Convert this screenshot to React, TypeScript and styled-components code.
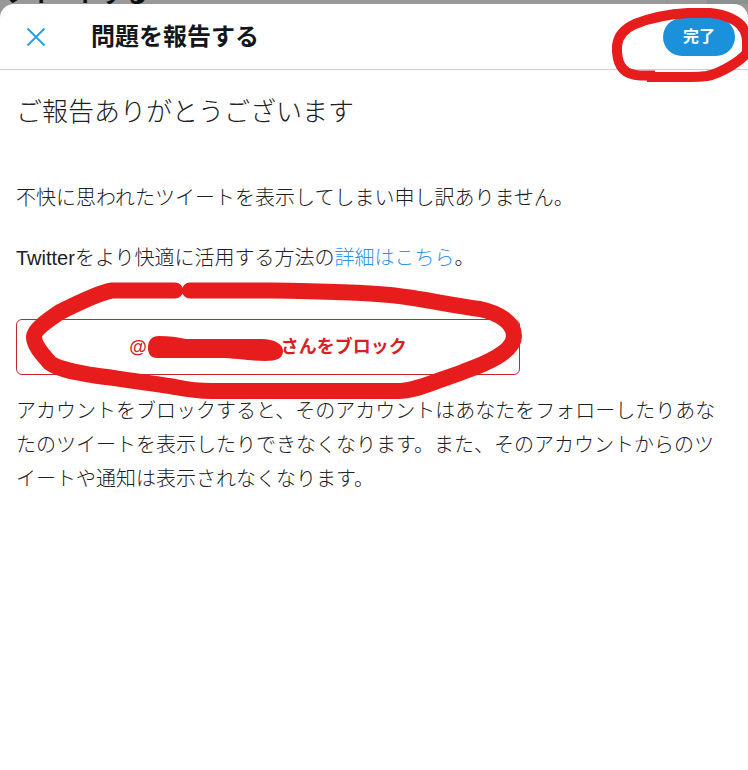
import React from "react";
import styled, { createGlobalStyle } from "styled-components";

const GlobalStyle = createGlobalStyle`
  * { box-sizing: border-box; }
  html, body, #root { height: 100%; }
  body {
    margin: 0;
    background: #999999;
    color: #1c2023;
    font-family: "Liberation Sans", "Noto Sans CJK JP", sans-serif;
    font-size: 20px;
    line-height: 34px;
  }
`;

const Page = styled.div`
  display: flex;
  flex-direction: column;
  min-height: 100%;
`;

const Backdrop = styled.div`
  display: flex;
  justify-content: space-between;
  align-items: flex-end;
  height: 24px;
  margin-bottom: -20px;
  padding-bottom: 20px;
  background: #999999;
`;

const BackdropTitle = styled.div`
  padding-left: 4px;
  color: #0c0f12;
  font-size: 24px;
  font-weight: 700;
  line-height: 20px;
  white-space: nowrap;
`;

const BackdropSearch = styled.div`
  display: flex;
  justify-content: flex-end;
  width: 81px;
  height: 4px;
  border-left: 1px solid #8a9094;
`;

const BackdropField = styled.div`
  width: 41px;
  height: 4px;
  background: #8b9093;
`;

const Dialog = styled.main`
  position: relative;
  flex: 1;
  border-radius: 14px 14px 0 0;
  background: #ffffff;
`;

const Header = styled.header`
  position: relative;
  display: flex;
  align-items: center;
  height: 66px;
  padding: 0 13px 0 26px;
  border-bottom: 1px solid #c8d1d8;
`;

const CloseButton = styled.button`
  display: flex;
  margin: 0;
  padding: 0;
  border: 0;
  background: none;
  cursor: pointer;
`;

const Title = styled.h1`
  flex: 1;
  margin: 0 0 0 45px;
  color: #14171a;
  font-size: 24px;
  font-weight: 700;
`;

const DoneButton = styled.button`
  height: 38px;
  padding: 0 20px;
  border: 0;
  border-radius: 19px;
  background: #1b91db;
  color: #ffffff;
  font: inherit;
  font-size: 16px;
  font-weight: 700;
  cursor: pointer;
`;

const Content = styled.div`
  padding: 25px 16px;
`;

const Heading = styled.h2`
  margin: 0 0 52px;
  font-size: 26px;
  font-weight: 300;
`;

const Paragraph = styled.p`
  margin: 0 0 26px;
  font-weight: 300;
`;

const Link = styled.a`
  color: #2b95e6;
  text-decoration: none;
`;

const BlockArea = styled.div`
  position: relative;
  max-width: 504px;
  margin: 44px 0 19px;
`;

const BlockButton = styled.button`
  display: flex;
  align-items: center;
  justify-content: center;
  width: 100%;
  height: 56px;
  padding: 0;
  border: 1px solid #c2282d;
  border-radius: 6px;
  background: #ffffff;
  color: #d81f26;
  font: inherit;
  font-size: 18px;
  font-weight: 700;
  cursor: pointer;
`;

const HiddenName = styled.svg`
  flex: none;
  margin: 0 -4px 0 0;
`;

const DoneMark = styled.svg`
  position: absolute;
  top: 0;
  right: 0;
  pointer-events: none;
`;

const BlockMark = styled.svg`
  position: absolute;
  top: -39px;
  left: 0;
  overflow: visible;
  pointer-events: none;
`;

const MARKER = "#e71c1c";

export default function App() {
  return (
    <Page>
      <GlobalStyle />
      <Backdrop aria-hidden="true">
        <BackdropTitle>ツイートする</BackdropTitle>
        <BackdropSearch>
          <BackdropField />
        </BackdropSearch>
      </Backdrop>
      <Dialog>
        <Header>
          <CloseButton aria-label="閉じる">
            <svg width="20" height="20" viewBox="0 0 20 20" fill="none" stroke="#2b9fe6" strokeWidth="2">
              <path d="M1.5 1.5 18.5 18.5M18.5 1.5 1.5 18.5" />
            </svg>
          </CloseButton>
          <Title>問題を報告する</Title>
          <DoneButton>完了</DoneButton>
          <DoneMark width="148" height="90" viewBox="600 4 148 90" fill="none" stroke={MARKER} strokeWidth="10" strokeLinejoin="round">
            <path d="M655 75.500H640C624 75 618 66 617 52V46C618 35 626 28 635 24C650 18 670 14 688 13H710C724 14 738 20 743 28Q747 34 747 42V53C740 61 722 73 707 76Q700 77 690 77H647" />
          </DoneMark>
        </Header>
        <Content>
          <Heading>ご報告ありがとうございます</Heading>
          <Paragraph>不快に思われたツイートを表示してしまい申し訳ありません。</Paragraph>
          <Paragraph>
            Twitterをより快適に活用する方法の<Link href="#details">詳細はこちら</Link>。
          </Paragraph>
          <BlockArea>
            <BlockButton>
              @
              <HiddenName width="138" height="30" viewBox="148 331 138 30" fill={MARKER} role="img" aria-label="ユーザー名">
                <path d="M149 347C149 339 153 335 160 335C170 335 178 336 187 338H262C276 338 284 343 284 350C284 357 278 360 266 360C252 360 238 357 220 357H158C152 357 149 353 149 347Z" />
              </HiddenName>
              さんをブロック
            </BlockButton>
            <BlockMark width="510" height="125" viewBox="16 280 510 125" fill="none" stroke={MARKER} strokeWidth="16" strokeLinejoin="round">
              <path
                strokeLinecap="round"
                d="M175 290.500H112C102 292 76 304 60 312C48 320 34 330 34 337C34 346 44 356 50 363C60 370 76 372 92 375C120 379 150 383 175 387C190 390 200 391 212 391H398C412 391 426 385 440 380C452 376 458 374 465 371C485 364 514 352 514 336C514 322 498 313 480 309C450 305 420 298 390 295C360 292 310 291 270 290.500H190"
              />
            </BlockMark>
          </BlockArea>
          <Paragraph>
            アカウントをブロックすると、そのアカウントはあなたをフォローしたりあなたのツイートを表示したりできなくなります。また、そのアカウントからのツイートや通知は表示されなくなります。
          </Paragraph>
        </Content>
      </Dialog>
    </Page>
  );
}
